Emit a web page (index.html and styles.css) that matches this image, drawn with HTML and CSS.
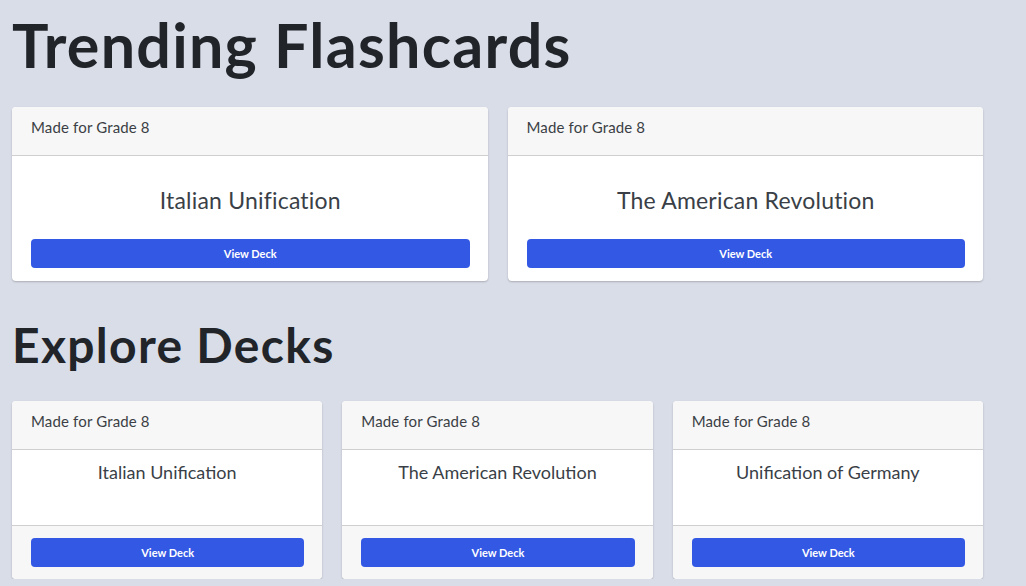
FILE: index.html
```html
<!DOCTYPE html>
<html lang="en">
<head>
<meta charset="utf-8">
<title>Flashcards</title>
<link rel="stylesheet" href="styles.css">
</head>
<body>
<main class="page">
  <h1 class="title-xl">Trending Flashcards</h1>
  <section class="grid grid-2">
    <article class="card">
      <header class="card-header">Made for Grade 8</header>
      <div class="card-body trending">
        <h2 class="deck-title big">Italian Unification</h2>
        <button class="btn">View Deck</button>
      </div>
    </article>
    <article class="card">
      <header class="card-header">Made for Grade 8</header>
      <div class="card-body trending">
        <h2 class="deck-title big">The American Revolution</h2>
        <button class="btn">View Deck</button>
      </div>
    </article>
  </section>

  <h1 class="title-lg">Explore Decks</h1>
  <section class="grid grid-3">
    <article class="card">
      <header class="card-header">Made for Grade 8</header>
      <div class="card-body explore"><h3 class="deck-title small">Italian Unification</h3></div>
      <footer class="card-footer"><button class="btn">View Deck</button></footer>
    </article>
    <article class="card">
      <header class="card-header">Made for Grade 8</header>
      <div class="card-body explore"><h3 class="deck-title small">The American Revolution</h3></div>
      <footer class="card-footer"><button class="btn">View Deck</button></footer>
    </article>
    <article class="card">
      <header class="card-header">Made for Grade 8</header>
      <div class="card-body explore"><h3 class="deck-title small">Unification of Germany</h3></div>
      <footer class="card-footer"><button class="btn">View Deck</button></footer>
    </article>
  </section>
</main>
</body>
</html>
```

FILE: styles.css
```css
* { box-sizing: border-box; }
html, body { margin: 0; padding: 0; }
body {
  background: #d9dde8;
  font-family: "Lato", "Noto Sans", sans-serif;
  color: #212529;
  overflow: hidden;
}
.page {
  width: 983px;
  padding: 0 0 0 12px;
}
.title-xl {
  margin: 0;
  padding-top: 9px;
  height: 107px;
  font-size: 61px;
  line-height: 72px;
  font-weight: 700;
  letter-spacing: 1.25px;
  color: #212429;
}
.title-lg {
  margin: 0;
  padding-top: 34px;
  height: 120px;
  font-size: 48px;
  line-height: 60px;
  font-weight: 700;
  letter-spacing: 1.3px;
  color: #212429;
}
.grid { display: grid; gap: 20px; }
.grid-2 { grid-template-columns: 1fr 1fr; height: 174px; }
.grid-3 { grid-template-columns: 1fr 1fr 1fr; }
.card {
  background: #fff;
  border-radius: 4px;
  box-shadow: 0 1px 2px rgba(0,0,0,0.22);
  overflow: hidden;
  display: flex;
  flex-direction: column;
}
.card-header {
  height: 49px;
  background: #f7f7f7;
  border-bottom: 1px solid #cfcfd2;
  padding: 11px 19px 0;
  font-size: 15px;
  line-height: 18px;
  letter-spacing: 0.15px;
  color: #3b3f45;
}
.card-body.trending {
  padding: 29px 18px 13px 19px;
  display: flex;
  flex-direction: column;
  align-items: stretch;
}
.deck-title {
  margin: 0;
  text-align: center;
  font-weight: 400;
  color: #3a3f47;
}
.deck-title.big { font-size: 23px; line-height: 30px; margin-bottom: 24px; letter-spacing: 0.2px; }
.deck-title.small { font-size: 18px; line-height: 24px; }
.card-body.explore {
  height: 76px;
  padding-top: 10px;
  border-bottom: 1px solid #cfcfd2;
}
.card-footer {
  background: #f7f7f7;
  padding: 12px 18px 12px 19px;
}
.btn {
  display: block;
  width: 100%;
  height: 29px;
  border: none;
  border-radius: 4px;
  background: #3358e4;
  color: #fff;
  font-family: "Lato", "Noto Sans", sans-serif;
  font-weight: 700;
  font-size: 11px;
  cursor: pointer;
}
```
